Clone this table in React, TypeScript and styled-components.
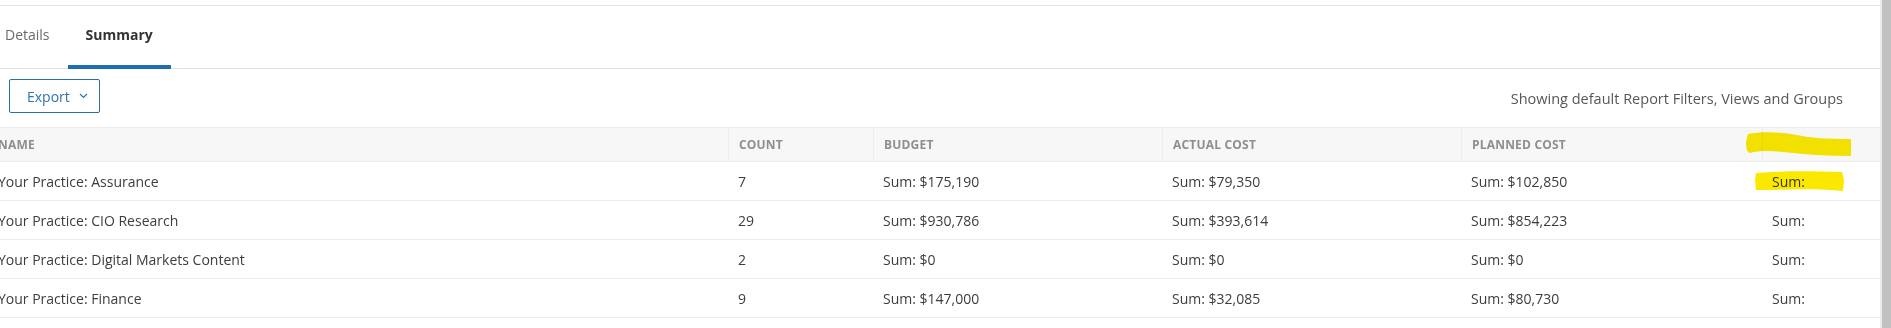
import React from "react";
import styled, { createGlobalStyle } from "styled-components";

const Global = createGlobalStyle`
  html, body { margin: 0; padding: 0; background: #fff; }
  body { font-family: "Open Sans", Lato, Arial, sans-serif; color: #3b3b3b; overflow: hidden; }
  * { box-sizing: border-box; }
`;

const Page = styled.div`
  display: flex;
  width: 1891px;
  height: 328px;
  overflow: hidden;
`;

const Main = styled.div`
  flex: 1;
  min-width: 0;
  display: flex;
  flex-direction: column;
`;

const Gutter = styled.div`
  width: 2px;
  background: #ececec;
`;

const Scrollbar = styled.div`
  width: 9px;
  background: #c1c1c1;
`;

const TopRule = styled.div`
  margin-top: 5px;
  height: 1px;
  background: #e3e3e3;
`;

const TabBar = styled.div`
  display: flex;
  height: 63px;
  margin-left: -13px;
  border-bottom: 1px solid #e1e1e1;
`;

const Tab = styled.div<{ $active?: boolean }>`
  display: flex;
  align-items: center;
  padding: 0 18px 2px;
  margin-bottom: -1px;
  font-size: 14px;
  font-weight: ${(p) => (p.$active ? 700 : 400)};
  color: ${(p) => (p.$active ? "#333" : "#6b6b6b")};
  border-bottom: 4px solid ${(p) => (p.$active ? "#1d6fb3" : "transparent")};
`;

const Toolbar = styled.div`
  display: flex;
  align-items: center;
  justify-content: space-between;
  height: 58px;
  padding: 0 37px 0 9px;
`;

const ExportButton = styled.button`
  display: flex;
  align-items: center;
  gap: 9px;
  height: 34px;
  width: 91px;
  margin-top: -4px;
  padding: 0 0 0 17px;
  border: 1px solid #2b6fa5;
  border-radius: 2px;
  background: #fff;
  color: #2f73ad;
  font-family: inherit;
  font-size: 14px;
`;

const FilterNote = styled.div`
  font-size: 14.5px;
  color: #575757;
`;

const Table = styled.div`
  margin-left: -12px;
  display: grid;
  grid-template-columns: 740px 145px 289px 299px 301px 1fr;
`;

const HeadCell = styled.div`
  height: 35px;
  display: flex;
  align-items: center;
  padding: 0 10px;
  background: #f7f7f7;
  border-top: 1px solid #ececec;
  border-bottom: 1px solid #ececec;
  border-left: 1px solid #ececec;
  font-size: 12px;
  font-weight: 700;
  letter-spacing: 0.2px;
  color: #8c8e91;
  position: relative;
  &:first-child { border-left: none; }
`;

const Cell = styled.div`
  height: 39px;
  display: flex;
  align-items: center;
  padding: 0 10px;
  border-bottom: 1px solid #ededed;
  font-size: 14px;
  color: #3d3d3d;
  position: relative;
`;

const Highlight = styled.svg`
  position: absolute;
  mix-blend-mode: multiply;
  pointer-events: none;
`;

const Chevron = () => (
  <svg width="9" height="6" viewBox="0 0 9 6" fill="none">
    <path d="M1 1l3.5 3.5L8 1" stroke="#2f73ad" strokeWidth="1.2" />
  </svg>
);

const HeaderMark = () => (
  <Highlight style={{ left: -18, top: 2, width: 107, height: 27 }} viewBox="0 0 107 27">
    <path
      d="M3 4 C18 1 35 2 52 5 C66 8 80 9 106 9 L106 26 C85 26 66 25 48 23 C32 21 16 20 5 23 C2 22 1 18 1 12 Z"
      fill="#fae800"
    />
  </Highlight>
);

const RowMark = () => (
  <Highlight style={{ left: -8, top: 8, width: 91, height: 22 }} viewBox="0 0 91 22">
    <path
      d="M2 3 C25 1 55 1 88 2 L90 10 L89 21 C70 19 45 19 20 20 L2 20 L1 10 Z"
      fill="#fae800"
    />
  </Highlight>
);

const headers = ["NAME", "COUNT", "BUDGET", "ACTUAL COST", "PLANNED COST", ""];

const rows = [
  ["Your Practice: Assurance", "7", "Sum: $175,190", "Sum: $79,350", "Sum: $102,850", "Sum:"],
  ["Your Practice: CIO Research", "29", "Sum: $930,786", "Sum: $393,614", "Sum: $854,223", "Sum:"],
  ["Your Practice: Digital Markets Content", "2", "Sum: $0", "Sum: $0", "Sum: $0", "Sum:"],
  ["Your Practice: Finance", "9", "Sum: $147,000", "Sum: $32,085", "Sum: $80,730", "Sum:"],
];

export default function App() {
  return (
    <>
      <Global />
      <Page>
        <Main>
          <TopRule />
          <TabBar>
            <Tab>Details</Tab>
            <Tab $active>Summary</Tab>
          </TabBar>
          <Toolbar>
            <ExportButton>
              Export <Chevron />
            </ExportButton>
            <FilterNote>Showing default Report Filters, Views and Groups</FilterNote>
          </Toolbar>
          <Table>
            {headers.map((h, i) => (
              <HeadCell key={i}>
                {h}
                {i === 5 && <HeaderMark />}
              </HeadCell>
            ))}
            {rows.map((r, ri) =>
              r.map((c, ci) => (
                <Cell key={`${ri}-${ci}`}>
                  {c}
                  {ri === 0 && ci === 5 && <RowMark />}
                </Cell>
              ))
            )}
          </Table>
        </Main>
        <Gutter />
        <Scrollbar />
      </Page>
    </>
  );
}
